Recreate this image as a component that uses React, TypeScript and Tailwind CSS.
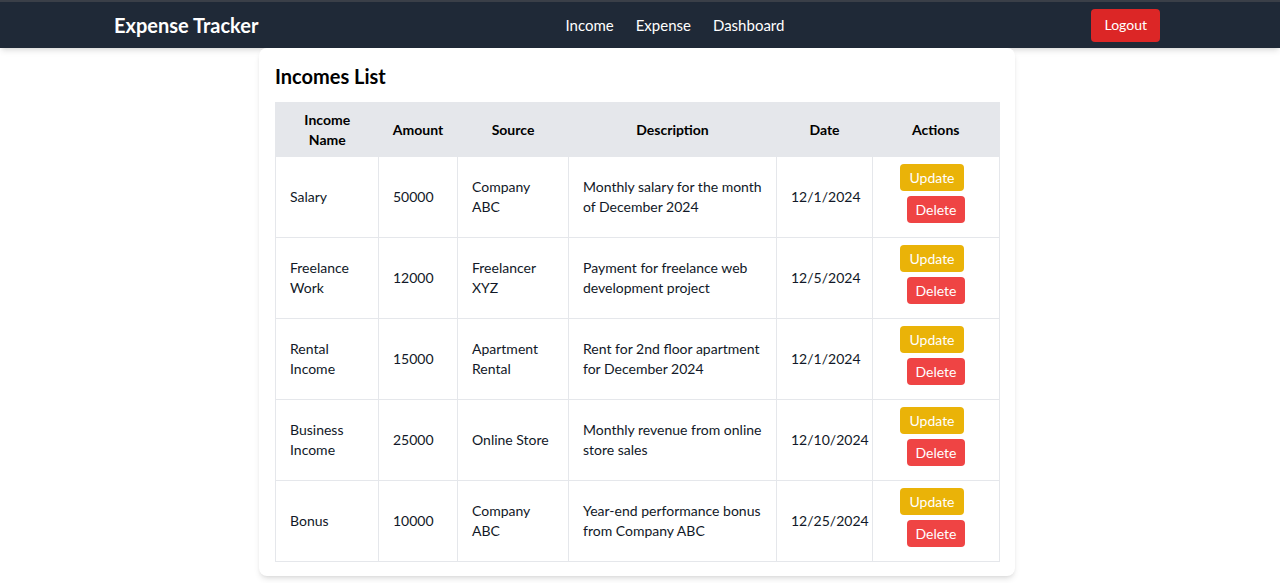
const incomes = [
  { name: 'Salary', amount: 50000, source: 'Company ABC', description: 'Monthly salary for the month of December 2024', date: '12/1/2024' },
  { name: 'Freelance Work', amount: 12000, source: 'Freelancer XYZ', description: 'Payment for freelance web development project', date: '12/5/2024' },
  { name: 'Rental Income', amount: 15000, source: 'Apartment Rental', description: 'Rent for 2nd floor apartment for December 2024', date: '12/1/2024' },
  { name: 'Business Income', amount: 25000, source: 'Online Store', description: 'Monthly revenue from online store sales', date: '12/10/2024' },
  { name: 'Bonus', amount: 10000, source: 'Company ABC', description: 'Year-end performance bonus from Company ABC', date: '12/25/2024' },
]

export default function App() {
  return (
    <div className="min-h-screen bg-white font-['Lato',sans-serif]">
      {/* Navbar */}
      <nav className="bg-[#1f2937] border-t-2 border-[#3a3f48] shadow-md pr-1.5">
        <div className="max-w-[1046px] mx-auto h-[46px] flex items-center justify-between">
          <span className="text-white text-xl font-bold">Expense Tracker</span>
          <div className="flex gap-[22px] text-white text-[15px]">
            <a href="#">Income</a>
            <a href="#">Expense</a>
            <a href="#">Dashboard</a>
          </div>
          <button className="bg-[#dc2626] text-white text-sm px-[13px] py-[6.5px] rounded">Logout</button>
        </div>
      </nav>

      {/* Incomes card */}
      <div className="pr-1.5">
        <div className="w-[756px] mx-auto bg-white rounded-lg shadow-md px-4 pt-3.5 pb-3.5">
          <h2 className="text-xl font-bold text-black mb-3">Incomes List</h2>
          <table className="w-full table-fixed border-collapse border border-[#e5e7eb] text-sm">
            <thead>
              <tr className="bg-[#e5e7eb] text-black">
                <th className="w-[103px] px-3.5 py-[6.5px] font-bold">Income Name</th>
                <th className="w-[79px] px-3.5 py-[6.5px] font-bold">Amount</th>
                <th className="w-[111px] px-3.5 py-[6.5px] font-bold">Source</th>
                <th className="w-[208px] px-3.5 py-[6.5px] font-bold">Description</th>
                <th className="w-[96px] px-3.5 py-[6.5px] font-bold">Date</th>
                <th className="w-[127px] px-3.5 py-[6.5px] font-bold">Actions</th>
              </tr>
            </thead>
            <tbody className="text-[#111827]">
              {incomes.map((inc) => (
                <tr key={inc.name}>
                  <td className="border border-[#e5e7eb] px-3.5 py-2.5">{inc.name}</td>
                  <td className="border border-[#e5e7eb] px-3.5 py-2.5">{inc.amount}</td>
                  <td className="border border-[#e5e7eb] px-3.5 py-2.5">{inc.source}</td>
                  <td className="border border-[#e5e7eb] px-3.5 py-2.5">{inc.description}</td>
                  <td className="border border-[#e5e7eb] px-3.5 py-2.5">{inc.date}</td>
                  <td className="border border-[#e5e7eb] px-3.5 pt-[7px] pb-[14px]">
                    <div className="flex flex-wrap justify-center gap-y-[5px]">
                      <button className="mr-2 bg-[#eab308] text-white px-[9px] py-[3.5px] rounded">Update</button>
                      <button className="bg-[#ef4444] text-white px-[9px] py-[3.5px] rounded">Delete</button>
                    </div>
                  </td>
                </tr>
              ))}
            </tbody>
          </table>
        </div>
      </div>
    </div>
  )
}
